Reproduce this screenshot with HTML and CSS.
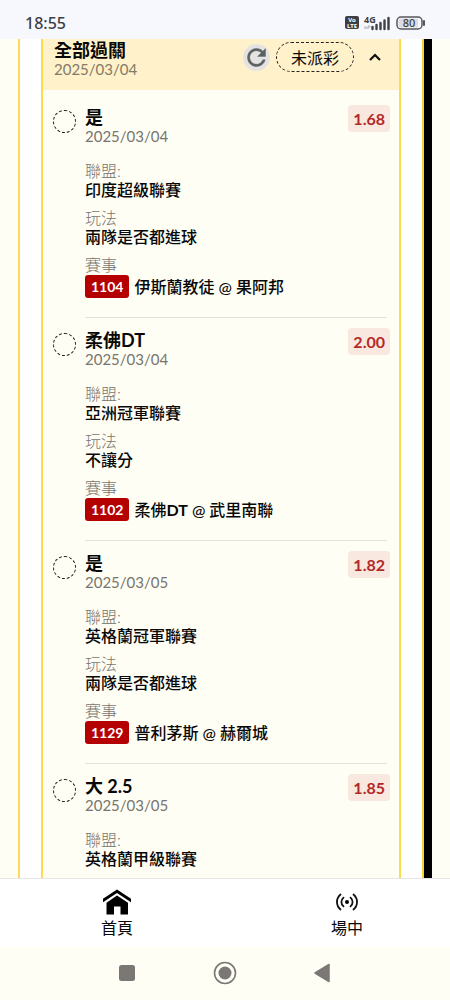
FILE: index.html
```html
<!DOCTYPE html>
<html lang="zh-Hant">
<head>
<meta charset="utf-8">
<meta name="viewport" content="width=device-width, initial-scale=1">
<title>全部過關</title>
<link rel="stylesheet" href="styles.css">
</head>
<body>
<div class="screen">
  <div class="status">
    <span class="clock">18:55</span>
    <div class="status-icons">
      <svg class="volte" width="14" height="13" viewBox="0 0 14 13"><rect width="14" height="13" rx="2" fill="#3d3f45"/><text x="7" y="6" class="volte-text">Vo</text><text x="7" y="12" class="volte-text">LTE</text></svg>
      <svg class="network" width="27" height="16" viewBox="0 0 27 16"><text x="0" y="8" class="net-text">4G</text><path d="M1 14v-3M3 14l-1-2M4 11v3M4 11h2v1H4" stroke="#b0b2b8" stroke-width="1" fill="none"/><path d="M8.500 14v-2M12.500 14v-4M16.500 14V8M20.500 14V5.500M24.500 14V3" stroke="#3d3f45" stroke-width="2.400" stroke-linecap="round"/></svg>
      <svg class="battery" width="30" height="14" viewBox="0 0 30 14"><rect x="1" y="1" width="25" height="12" rx="4" fill="#f7f8fe" stroke="#55575d" stroke-width="1.500"/><path d="M5 2.500h17v9H5a2.500 2.500 0 0 1-2.500-2.500V5A2.500 2.500 0 0 1 5 2.500z" fill="#dcdde2"/><path d="M28 5v4" stroke="#55575d" stroke-width="2" stroke-linecap="round"/><text x="13" y="11" class="battery-text">80</text></svg>
    </div>
  </div>

  <main class="page">
    <div class="outer">
      <section class="ticket">
        <header class="ticket-head">
          <div>
            <h1 class="title">全部過關</h1>
            <div class="date">2025/03/04</div>
          </div>
          <div class="actions">
            <button class="refresh" type="button" aria-label="重新整理"><svg width="27" height="27" viewBox="0 0 24 24"><path d="M17.650 6.350C16.200 4.900 14.210 4 12 4c-4.420 0-7.990 3.580-7.990 8s3.570 8 7.990 8c3.730 0 6.840-2.550 7.730-6h-2.080c-.82 2.330-3.040 4-5.650 4-3.310 0-6-2.690-6-6s2.690-6 6-6c1.660 0 3.140.69 4.220 1.780L13 11h7V4z" fill="#5b6063" stroke="#5b6063" stroke-width=".4"/></svg></button>
            <button class="pending" type="button">未派彩</button>
            <button class="fold" type="button" aria-label="收合"><svg width="14" height="10" viewBox="0 0 14 10"><path d="M2 8l5-5 5 5" fill="none" stroke="#111" stroke-width="2.200"/></svg></button>
          </div>
        </header>
        <div class="legs">
          <article class="leg">
            <span class="ring"></span>
            <div class="info">
              <div class="top"><div><h2 class="title">是</h2><div class="date">2025/03/04</div></div><span class="odds">1.68</span></div>
              <dl class="facts">
                <div><dt>聯盟:</dt><dd>印度超級聯賽</dd></div>
                <div><dt>玩法</dt><dd>兩隊是否都進球</dd></div>
                <div><dt>賽事</dt><dd class="match"><span class="code">1104</span>伊斯蘭教徒 @ 果阿邦</dd></div>
              </dl>
            </div>
          </article>
          <article class="leg">
            <span class="ring"></span>
            <div class="info">
              <div class="top"><div><h2 class="title">柔佛DT</h2><div class="date">2025/03/04</div></div><span class="odds">2.00</span></div>
              <dl class="facts">
                <div><dt>聯盟:</dt><dd>亞洲冠軍聯賽</dd></div>
                <div><dt>玩法</dt><dd>不讓分</dd></div>
                <div><dt>賽事</dt><dd class="match"><span class="code">1102</span><span>柔佛<b>DT</b> @ 武里南聯</span></dd></div>
              </dl>
            </div>
          </article>
          <article class="leg">
            <span class="ring"></span>
            <div class="info">
              <div class="top"><div><h2 class="title">是</h2><div class="date">2025/03/05</div></div><span class="odds">1.82</span></div>
              <dl class="facts">
                <div><dt>聯盟:</dt><dd>英格蘭冠軍聯賽</dd></div>
                <div><dt>玩法</dt><dd>兩隊是否都進球</dd></div>
                <div><dt>賽事</dt><dd class="match"><span class="code">1129</span>普利茅斯 @ 赫爾城</dd></div>
              </dl>
            </div>
          </article>
          <article class="leg">
            <span class="ring"></span>
            <div class="info">
              <div class="top"><div><h2 class="title">大 2.5</h2><div class="date">2025/03/05</div></div><span class="odds">1.85</span></div>
              <dl class="facts">
                <div><dt>聯盟:</dt><dd>英格蘭甲級聯賽</dd></div>
              </dl>
            </div>
          </article>
        </div>
      </section>
    </div>
  </main>

  <nav class="tabs">
    <a class="tab" href="#home"><svg width="30" height="26" viewBox="0 0 30 26"><path d="M1 13.200V9.800L15 .500l14 9.300v3.400L15 4z"/><path d="M15 6.500L26 13.800V25.500h-7.500v-8h-6.500v8H4.500V13.800z"/></svg><span>首頁</span></a>
    <a class="tab" href="#live"><svg width="22" height="26" viewBox="0 0 22 26"><g fill="none" stroke="#111" stroke-width="1.800" stroke-linecap="round"><path d="M4.500 5.500C-.200 9.500-.200 16.500 4.500 20.500M17.500 5.500c4.700 4 4.700 11 0 15M7.500 8.700c-2.800 2.500-2.800 6.100 0 8.600M14.500 8.700c2.800 2.500 2.800 6.100 0 8.600"/></g><circle cx="11" cy="13" r="2"/></svg><span>場中</span></a>
  </nav>

  <div class="system">
    <button type="button" aria-label="最近"><svg width="24" height="24" viewBox="0 0 24 24"><rect x="4" y="4" width="16" height="16" rx="2.500" fill="#7a7775"/></svg></button>
    <button type="button" aria-label="主畫面"><svg width="24" height="24" viewBox="0 0 24 24"><circle cx="12" cy="12" r="10.500" fill="#fffef5" stroke="#7a7775" stroke-width="1.600"/><circle cx="12" cy="12" r="6.500" fill="#7a7775"/></svg></button>
    <button type="button" aria-label="返回"><svg width="24" height="24" viewBox="0 0 24 24"><path d="M5 12L19 3.500v17z" fill="#7a7775" stroke="#7a7775" stroke-width="1.500" stroke-linejoin="round"/></svg></button>
  </div>
</div>
</body>
</html>
```

FILE: styles.css
```css
* {
  box-sizing: border-box;
}

body {
  margin: 0;
  background: #fffef5;
  color: #080808;
  font: 16px/19px Lato, "Noto Sans CJK TC", sans-serif;
}

h1, h2, dl, dd {
  margin: 0;
}

svg {
  display: block;
}

button {
  padding: 0;
  border: 0;
  background: none;
  color: inherit;
  font: inherit;
}

.screen {
  display: flex;
  flex-direction: column;
  height: 100vh;
}

.status {
  display: flex;
  flex: none;
  align-items: center;
  justify-content: space-between;
  height: 39px;
  padding: 6px 24px 0 25px;
  background: #f7f8fe;
}

.clock {
  color: #3d3f45;
  font: 500 16px/20px "Noto Sans", sans-serif;
}

.status-icons {
  display: flex;
  align-items: center;
  gap: 5px;
}

.network {
  overflow: visible;
}

.volte-text, .net-text, .battery-text {
  font-family: "Noto Sans", sans-serif;
  font-weight: 700;
}

.volte-text {
  fill: #fff;
  font-size: 6px;
  text-anchor: middle;
}

.net-text {
  fill: #3d3f45;
  font-size: 9px;
}

.battery-text {
  fill: #3d3f45;
  font-size: 11px;
  font-weight: 500;
  text-anchor: middle;
}

.page {
  flex: 1;
  min-height: 0;
  padding: 0 18px;
  overflow: hidden;
}

.outer {
  min-height: 100%;
  padding: 0 23px 0 21px;
  border-left: 2px solid #fbd95a;
  border-right: 8px solid #000;
  background: #fff;
  box-shadow: inset -2px 0 #f3d53c;
}

.ticket {
  border: solid #fadc4e;
  border-width: 0 2px;
  background: #fffef5;
}

.ticket-head {
  display: flex;
  justify-content: space-between;
  height: 51px;
  padding: 2px 17px 0 11px;
  background: #fff1c9;
}

.title {
  font-size: 18px;
  font-weight: 700;
  line-height: 19px;
}

.date {
  color: #77756e;
  font-size: 15px;
}

.ticket-head .date {
  color: #827b65;
}

.actions {
  display: flex;
  align-items: center;
  height: 32px;
}

.refresh {
  margin-right: 6px;
  border-radius: 50%;
  background: #e4e3e2;
}

.pending {
  height: 30px;
  padding: 0 14px;
  border: 1px dashed #222;
  border-radius: 15px;
}

.fold {
  margin-left: 14px;
}

.legs {
  padding: 5px 12px 0 10px;
}

.leg {
  display: flex;
  gap: 9px;
}

.ring {
  flex: none;
  width: 23px;
  height: 23px;
  margin-top: 15px;
  border: 1px dashed #222;
  border-radius: 50%;
}

.info {
  flex: 1;
  padding: 13px 0 18px;
  border-bottom: 1px solid #e2e1da;
}

.top {
  display: flex;
  align-items: flex-start;
  justify-content: space-between;
  margin-right: -3px;
}

.odds {
  margin-top: -3px;
  padding: 4px 5px;
  border-radius: 4px;
  background: #f9e8e0;
  color: #b22a28;
  font-weight: 700;
}

.facts {
  display: grid;
  gap: 9px;
  margin-top: 15px;
}

dt {
  color: #77756e;
  font-weight: 300;
}

dd {
  font-weight: 500;
}

.match {
  display: flex;
  align-items: center;
  gap: 5px;
  height: 25px;
}

.code {
  padding: 2px 6px;
  border-radius: 3px;
  background: #b40000;
  color: #fff;
  font-size: 14px;
  font-weight: 700;
}

.tabs {
  display: flex;
  flex: none;
  justify-content: space-between;
  height: 69px;
  padding: 10px 71px 0 85px;
  border-top: 1px solid #e5e5e5;
  background: #fff;
}

.tab {
  display: flex;
  flex-direction: column;
  align-items: center;
  gap: 3px;
  width: 64px;
  color: #080808;
  text-decoration: none;
}

.system {
  display: flex;
  flex: none;
  align-items: center;
  justify-content: space-between;
  height: 53px;
  padding: 0 116px 2px 115px;
}
```
